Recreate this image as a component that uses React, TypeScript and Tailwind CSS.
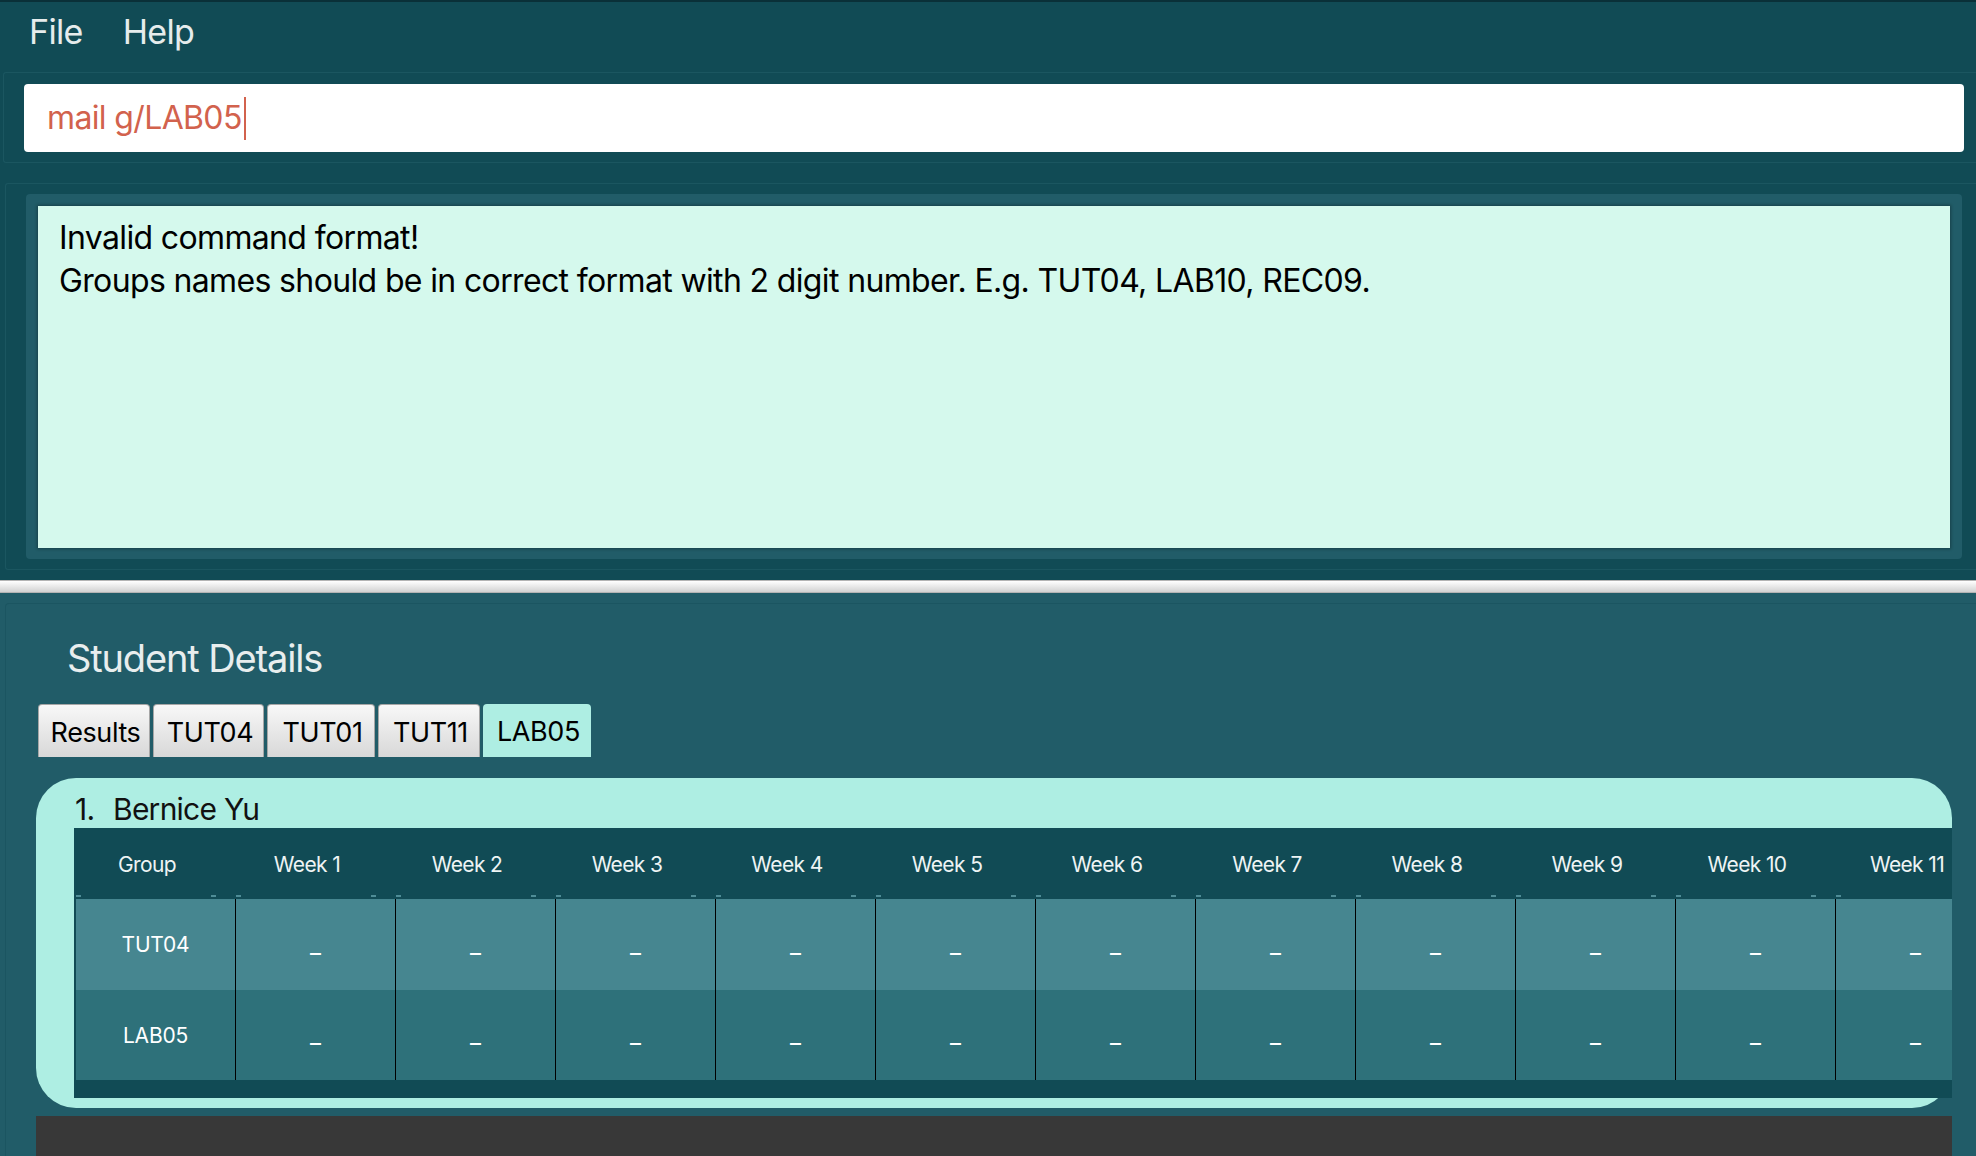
const weeks = Array.from({ length: 13 }, (_, i) => `Week ${i + 1}`);
const rows = [
  { group: "TUT04", bg: "bg-[#468690]", h: "h-[91px]" },
  { group: "LAB05", bg: "bg-[#2e717a]", h: "h-[90px]" },
];

const tabs = [
  { label: "Results", w: "w-[112px]" },
  { label: "TUT04", w: "w-[111px]" },
  { label: "TUT01", w: "w-[108px]" },
  { label: "TUT11", w: "w-[102px]" },
];

export default function App() {
  return (
    <div className="w-[1976px] h-[1156px] overflow-hidden bg-[#114b55] font-['Inter',sans-serif] flex flex-col">
      {/* menu bar */}
      <div className="h-[72px] shrink-0 border-t-2 border-[#0a3038] flex items-start pt-[13px] pl-[29px] gap-[40px] text-[34px] leading-none tracking-[-0.02em] text-[#e6ecec]">
        <span>File</span>
        <span>Help</span>
      </div>

      {/* command box */}
      <div className="h-[91px] shrink-0 ml-[3px] border border-r-0 border-[#1b5660] rounded-l-[3px] pl-[20px] pr-[12px] pt-[11px]">
        <div className="h-[68px] bg-white rounded-[4px] flex items-center pl-[23px] text-[32px] leading-none tracking-[-0.02em] text-[#d2624d]">
          <span>mail g/LAB05</span>
          <span className="w-[2px] h-[43px] bg-[#d2624d] ml-[2px]"></span>
        </div>
      </div>

      <div className="h-[20px] shrink-0"></div>

      {/* result display */}
      <div className="h-[387px] shrink-0 ml-[5px] border border-r-0 border-[#1b5660] rounded-l-[3px] pl-[20px] pr-[14px] py-[10px]">
        <div className="h-full bg-[#215c68] rounded-[4px] pt-[12px] px-[12px] pb-[11px]">
          <div className="h-full bg-[#d5f9ed] shadow-[0_0_3px_1px_rgba(0,0,0,0.3)] pl-[21px] pt-[10px] text-[32px] leading-[43px] tracking-[-0.02em] text-black">
            <div>Invalid command format!</div>
            <div>Groups names should be in correct format with 2 digit number. E.g. TUT04, LAB10, REC09.</div>
          </div>
        </div>
      </div>

      {/* splitter */}
      <div className="h-[10px] shrink-0"></div>
      <div className="h-[13px] shrink-0 border-t border-b border-[#b4b4b4] bg-linear-to-b from-white to-[#d2d2d2]"></div>

      {/* bottom pane */}
      <div className="flex-1 bg-[#215c68] pt-[10px] pl-[5px] flex flex-col min-h-0">
        <div className="flex-1 border-l border-t border-[#1b5561] rounded-tl-[4px] flex flex-col min-h-0">
          <div className="pl-[61px] mt-[35px] text-[38px] leading-none tracking-[-0.03em] text-[#e8eeee]">Student Details</div>

          <div className="flex items-end gap-[3px] pl-[32px] mt-[27px]">
            {tabs.map((t) => (
              <div key={t.label} className={`${t.w} h-[53px] pl-[3px] pt-[2px] border border-b-0 border-[#a6a6a6] rounded-t-[4px] bg-linear-to-b from-[#f8f8f8] to-[#d8d8d8] flex items-center justify-center text-[27px] leading-none tracking-[-0.015em] text-black`}>
                {t.label}
              </div>
            ))}
            <div className="w-[108px] h-[53px] pl-[3px] pt-[2px] bg-[#aeeee3] rounded-t-[4px] flex items-center justify-center text-[27px] leading-none tracking-[-0.015em] text-black">
              LAB05
            </div>
          </div>

          {/* student card */}
          <div className="ml-[30px] mr-[24px] mt-[21px] bg-[#aeeee3] rounded-[40px] pl-[38px] pt-[16px] pb-[10px]">
            <div className="pl-[1px] text-[30px] leading-none tracking-[-0.025em] text-[#111] flex">
              <span className="w-[38px]">1.</span>
              <span>Bernice Yu</span>
            </div>
            <div className="mt-[4px] bg-[#114b55] overflow-hidden pl-[2px]">
              {/* header */}
              <div className="flex h-[71px]">
                {["Group", ...weeks].map((c) => (
                  <div key={c} className="relative w-[160px] shrink-0 flex items-center justify-center pr-[18px] pt-[2px] text-[21px] leading-none tracking-[-0.03em] text-[#eef4f4]">
                    {c}
                    <span className="absolute left-[0px] bottom-[2px] w-[5px] h-[2px] bg-[#4f8d97]"></span>
                    <span className="absolute right-[20px] bottom-[2px] w-[5px] h-[2px] bg-[#4f8d97]"></span>
                  </div>
                ))}
              </div>
              {rows.map((r) => (
                <div key={r.group} className={`flex ${r.h} ${r.bg}`}>
                  <div className="w-[160px] shrink-0 border-r border-black flex items-center justify-center text-[21px] leading-none tracking-[-0.01em] text-white">
                    {r.group}
                  </div>
                  {weeks.map((w) => (
                    <div key={w} className="w-[160px] shrink-0 border-r border-black flex items-center justify-center text-[24px] leading-none text-white">
                      _
                    </div>
                  ))}
                </div>
              ))}
              <div className="h-[18px]"></div>
            </div>
          </div>

          <div className="ml-[30px] mr-[24px] mt-[8px] flex-1 bg-[#383838]"></div>
        </div>
      </div>
    </div>
  );
}
